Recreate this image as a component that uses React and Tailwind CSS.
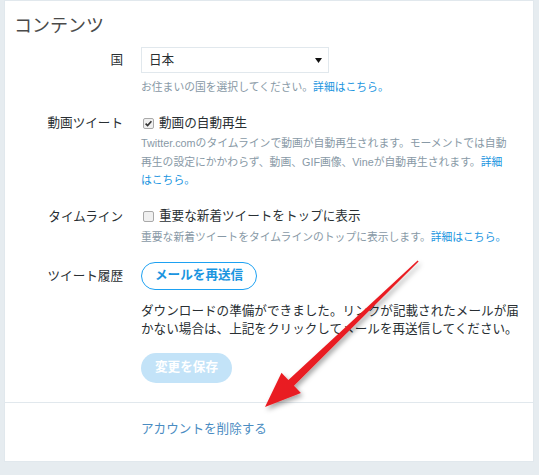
const font = { fontFamily: '"Liberation Sans", "Noto Sans CJK JP", sans-serif' };

function Check({ checked }) {
  return (
    <svg width="11" height="11" viewBox="0 0 11 11" className="shrink-0">
      <rect x="0.5" y="0.5" width="10" height="10" rx="1.5" fill="#f0f0f0" stroke="#a9a9a9" />
      {checked && (
        <path d="M2.6 5.6 L4.6 7.6 L8.4 3.2" fill="none" stroke="#333" strokeWidth="1.6" />
      )}
    </svg>
  );
}

function Row({ label, children, labelClass = "" }) {
  return (
    <div className="flex gap-[18px]">
      <div className={`w-[118px] shrink-0 text-right text-[12.6px] text-[#292f33] ${labelClass}`}>
        {label}
      </div>
      <div className="flex-1">{children}</div>
    </div>
  );
}

function Arrow() {
  return (
    <svg className="absolute left-0 top-0 pointer-events-none" width="539" height="475">
      <defs>
        <filter id="sh" x="-20%" y="-20%" width="140%" height="140%">
          <feDropShadow dx="2" dy="3" stdDeviation="2.5" floodColor="#000" floodOpacity="0.35" />
        </filter>
        <linearGradient id="rg" x1="0" y1="0" x2="1" y2="1">
          <stop offset="0" stopColor="#f2262b" />
          <stop offset="1" stopColor="#e0141a" />
        </linearGradient>
      </defs>
      <polygon
        filter="url(#sh)"
        fill="url(#rg)"
        points="418.6,261.4 417.6,260.6 288.4,379.9 281.5,372.7 265,407 300.9,392.9 294,385.7"
      />
    </svg>
  );
}

export default function App() {
  return (
    <div className="relative min-h-screen bg-[#e6ecf0] pl-[4px]" style={font}>
      <div className="w-[530px] border border-[#e1e8ed] bg-white pt-[13px] pb-[22px]">
        <h2 className="pl-[9px] text-[18px] leading-[24px] text-[#4a4a4a]">コンテンツ</h2>

        <div className="mt-[9px]">
          <Row label="国" labelClass="leading-[26px]">
            <div className="flex h-[26px] w-[188px] items-center justify-between border border-[#e1e8ed] bg-white pl-[7px] pr-[6px] text-[12.6px] text-[#292f33]">
              <span>日本</span>
              <svg width="7" height="5" viewBox="0 0 7 5">
                <path d="M0 0 H7 L3.5 5 Z" fill="#111" />
              </svg>
            </div>
            <p className="mt-[5px] text-[10.8px] leading-[18px] text-[#8899a6]">
              お住まいの国を選択してください。<span className="text-[#1b95e0]">詳細はこちら。</span>
            </p>
          </Row>
        </div>

        <div className="mt-[17px]">
          <Row label="動画ツイート" labelClass="leading-[20px]">
            <label className="flex h-[20px] items-center gap-[5px] pl-[2px] text-[12.6px] text-[#292f33]">
              <Check checked />
              <span>動画の自動再生</span>
            </label>
            <p className="mt-[1px] whitespace-nowrap text-[10.8px] leading-[18.5px] text-[#8899a6]">
              Twitter.comのタイムラインで動画が自動再生されます。モーメントでは自動
              <br />
              再生の設定にかかわらず、動画、GIF画像、Vineが自動再生されます。<span className="text-[#1b95e0]">詳細</span>
              <br />
              <span className="text-[#1b95e0]">はこちら。</span>
            </p>
          </Row>
        </div>

        <div className="mt-[17px]">
          <Row label="タイムライン" labelClass="leading-[20px]">
            <label className="flex h-[20px] items-center gap-[5px] pl-[2px] text-[12.6px] text-[#292f33]">
              <Check />
              <span>重要な新着ツイートをトップに表示</span>
            </label>
            <p className="mt-[1px] whitespace-nowrap text-[10.8px] leading-[18px] text-[#8899a6]">
              重要な新着ツイートをタイムラインのトップに表示します。<span className="text-[#1b95e0]">詳細はこちら。</span>
            </p>
          </Row>
        </div>

        <div className="mt-[16px]">
          <Row label="ツイート履歴" labelClass="leading-[28px]">
            <button className="h-[28px] rounded-full border border-[#1da1f2] px-[13px] text-[12.6px] font-bold text-[#1b95e0]">
              メールを再送信
            </button>
            <p className="mt-[12px] whitespace-nowrap text-[12.6px] leading-[18px] text-[#292f33]">
              ダウンロードの準備ができました。リンクが記載されたメールが届
              <br />
              かない場合は、上記をクリックしてメールを再送信してください。
            </p>
            <button className="mt-[15px] h-[30px] w-[91px] rounded-full bg-[#c3e3f8] text-[12.6px] font-bold text-white">
              変更を保存
            </button>
          </Row>
        </div>

        <div className="mt-[19px] border-t border-[#e1e8ed] pt-[16px]">
          <div className="pl-[136px] text-[12.6px] leading-[20px] text-[#4a8cc2]">アカウントを削除する</div>
        </div>
      </div>
      <Arrow />
    </div>
  );
}
